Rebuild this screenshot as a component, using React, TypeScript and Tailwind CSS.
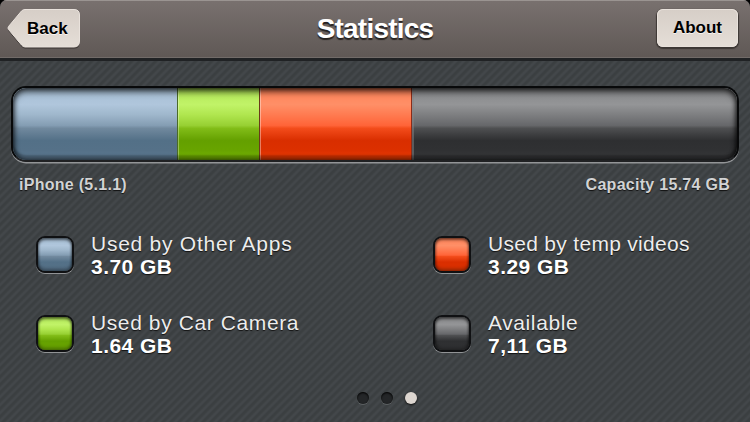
import clsx from "clsx";

const blue = "bg-[linear-gradient(180deg,#a6bed4_0%,#b0c6dc_23%,#9fb7cc_37%,#849db3_52%,#71899e_56%,#537087_73%,#557188_87%,#5d7a92_100%)]";
const green = "bg-[linear-gradient(180deg,#b0e656_0%,#c1f368_23%,#b0e64f_37%,#97d033_52%,#82bd18_56%,#64a000_73%,#68a400_87%,#77b606_100%)]";
const red = "bg-[linear-gradient(180deg,#ff8257_0%,#ff8f67_23%,#ff7b51_37%,#ff6438_52%,#f34c1b_56%,#d92e00_73%,#dc3000_87%,#ed3c06_100%)]";
const grey = "bg-[linear-gradient(180deg,#858688_0%,#949597_23%,#7e7f81_37%,#66676a_52%,#4e4f51_56%,#2e2f31_73%,#303133_87%,#393a3c_100%)]";

const Header = () => {
  return (
    <header className="flex h-[61px] items-start justify-between border-b-[3px] border-[#202224] bg-linear-to-b from-[#79716f] to-[#5f5855] pt-[9px] pr-3 pl-[7px] shadow-[inset_0_1px_0_#9a9491,inset_0_-1px_0_#716b68]">
      <button className="relative flex h-10 w-[73px] items-start pt-[9px] pl-5 text-[17px] leading-5 font-bold text-black">
        <svg className="absolute inset-0 overflow-visible" width="73" height="40" viewBox="0 0 73 40">
          <defs>
            <linearGradient id="back" x1="0" y1="0" x2="0" y2="1">
              <stop offset="0" stopColor="#d6cec7" />
              <stop offset="1" stopColor="#e5ded7" />
            </linearGradient>
          </defs>
          <path d="M18 2H67Q72.500 2 72.500 7V34Q72.500 39.500 67 39.500H18Q16 39.500 14.500 37.500L1.500 22Q.5 20.500 1.500 19L14.500 3Q16 2 18 2Z" fill="#383330" />
          <path d="M18 .5H67Q72.500 .5 72.500 6V32Q72.500 38 67 38H18Q16 38 14.500 36L1.500 20.500Q.5 19 1.500 17.500L14.500 2Q16 .5 18 .5Z" fill="url(#back)" stroke="#e9e2dc" strokeWidth="1" />
        </svg>
        <span className="relative mt-px [text-shadow:0_1px_0_#f8f4f0]">Back</span>
      </button>
      <h1 className="ml-[13px] pt-0.5 text-[28px] leading-9 font-bold tracking-[-0.78px] text-white [text-shadow:0_2px_1px_#262220]">Statistics</h1>
      <button className="h-[38px] w-[81px] rounded-md bg-linear-to-b from-[#d6cec7] to-[#e5ded7] text-[17px] leading-[38px] font-bold text-black shadow-[inset_0_0_0_1px_#e8e1db,0_1px_1px_1px_#3c3734] [text-shadow:0_1px_0_#f8f4f0]">
        About
      </button>
    </header>
  );
};

const UsageBar = () => {
  return (
    <div className="relative mx-[11px] mt-[25px] flex h-[76px] overflow-hidden rounded-[15px] border-2 border-[#08090a] border-b-[#202123] shadow-[0_1.500px_0_#939597]">
      <div className={clsx("w-[164px]", blue)} />
      <div className={clsx("w-[82px] border-l border-[#4a6a28] shadow-[inset_1px_0_0_#ffffff50]", green)} />
      <div className={clsx("w-[153px] border-l border-[#6a3a1b] shadow-[inset_1px_0_0_#ffffff60,inset_-1px_0_0_#8b2d1a]", red)} />
      <div className={clsx("flex-1 shadow-[inset_2px_0_0_#85868880]", grey)} />
      <div className="pointer-events-none absolute inset-0 rounded-[13px] shadow-[inset_0_4px_6px_#000000a0,inset_2px_0_4px_#00000060,inset_-2px_0_4px_#00000070,inset_0_-5px_2px_#00000038]" />
    </div>
  );
};

type UsageProps = {
  label: string;
  size: string;
  color: string;
  tracking?: string;
};

const Usage = ({ label, size, color, tracking = "tracking-[0.6px]" }: UsageProps) => {
  return (
    <div className="flex h-[79px] items-start">
      <div className="relative mt-1 h-[37px] w-[38px] shrink-0 rounded-[9px] border-2 border-[#101113] shadow-[0_1px_0_#919395]">
        <div className={clsx("h-full rounded-[7px]", color)} />
        <div className="absolute inset-0 rounded-[7px] shadow-[inset_0_2px_3px_#00000080,inset_0_-3px_3px_#00000040,inset_0_0_3px_#00000060]" />
      </div>
      <div className="ml-[17px] text-[21px] whitespace-nowrap [text-shadow:0_1px_1px_#111]">
        <div className={clsx("leading-6 text-[#ededed]", tracking)}>{label}</div>
        <div className="leading-[22px] font-bold tracking-[0.45px] text-white">{size}</div>
      </div>
    </div>
  );
};

const App = () => {
  return (
    <div className="h-[422px] w-[750px] overflow-hidden bg-black font-['Liberation_Sans',Arial,sans-serif]">
      <div className="h-full overflow-hidden rounded-t-[7px] bg-[repeating-linear-gradient(135deg,#3b3f41_0px,#3c4042_1.500px,#43474a_3px,#43474a_4px,#3b3f41_5.657px)]">
        <Header />
        <UsageBar />
        <div className="mt-[13px] flex justify-between pr-5 pl-[19px] text-[16px] leading-5 font-bold tracking-[0.28px] text-[#d2d3d4] [text-shadow:0_1px_1px_#111]">
          <span>iPhone (5.1.1)</span>
          <span>Capacity 15.74 GB</span>
        </div>
        <div className="mt-[37px] grid grid-cols-[397px_1fr] pl-9">
          <Usage label="Used by Other Apps" size="3.70 GB" color={blue} tracking="tracking-[0.75px]" />
          <Usage label="Used by temp videos" size="3.29 GB" color={red} tracking="tracking-[0.3px]" />
          <Usage label="Used by Car Camera" size="1.64 GB" color={green} />
          <Usage label="Available" size="7,11 GB" color={grey} />
        </div>
        <div className="mt-0.5 flex justify-center gap-3 pl-6">
          <span className="h-3 w-3 rounded-full bg-[#242628] shadow-[inset_0_1px_2px_#000,0_1px_0_#5c6062]" />
          <span className="h-3 w-3 rounded-full bg-[#242628] shadow-[inset_0_1px_2px_#000,0_1px_0_#5c6062]" />
          <span className="h-3 w-3 rounded-full bg-[#ddd6d0] shadow-[0_1px_2px_#111]" />
        </div>
      </div>
    </div>
  );
};

export default App;
